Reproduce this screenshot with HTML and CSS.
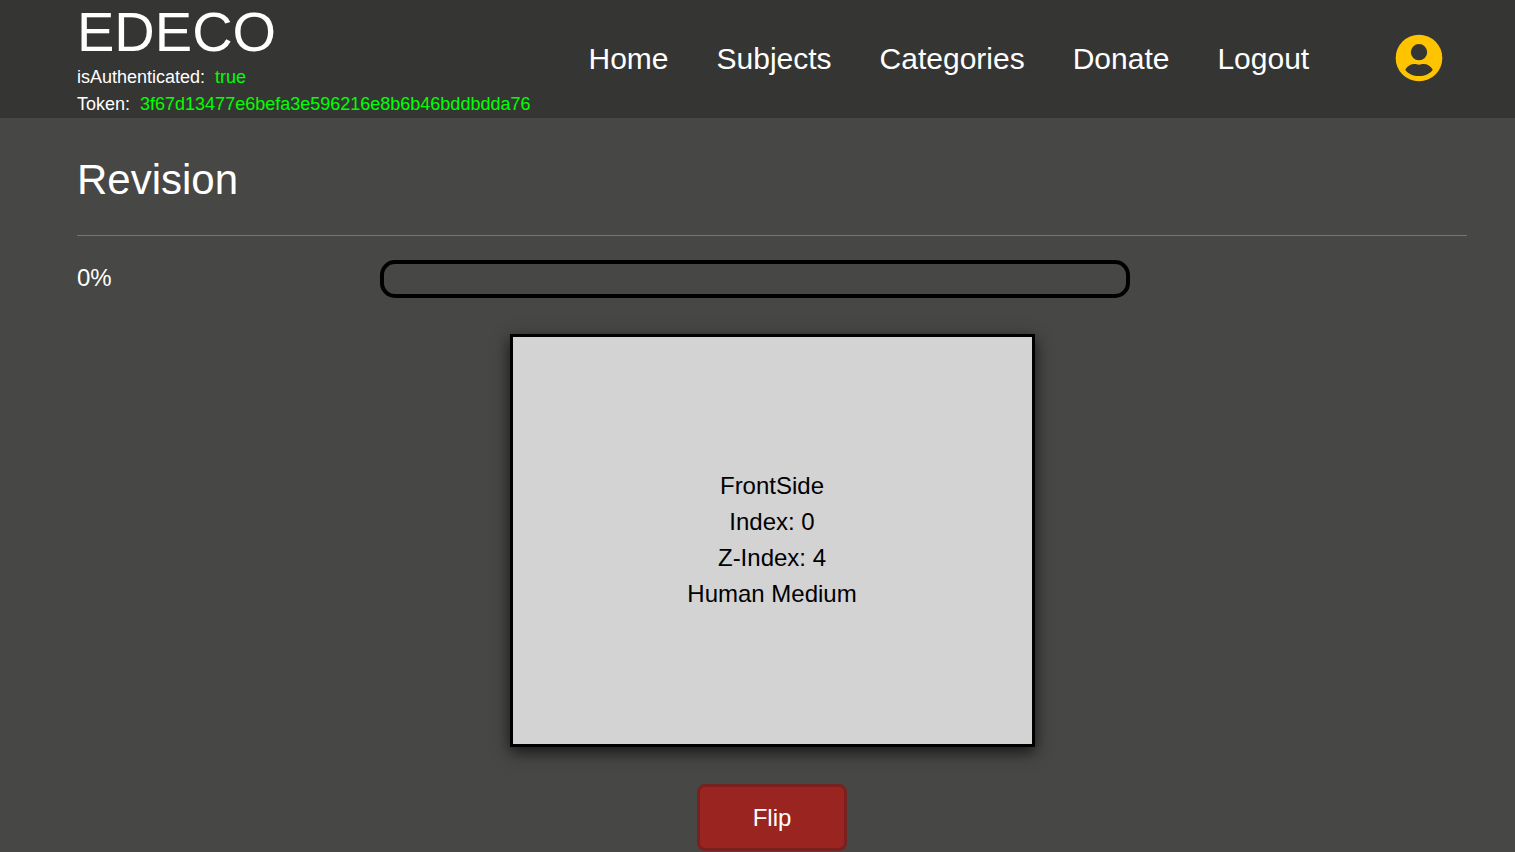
FILE: index.html
```html
<!DOCTYPE html>
<html lang="en">
<head>
<meta charset="utf-8">
<meta name="viewport" content="width=device-width, initial-scale=1">
<title>EDECO - Revision</title>
<link rel="stylesheet" href="styles.css">
</head>
<body>
<header class="header">
  <div class="brand">
    <a class="brand-name" href="#">EDECO</a>
    <div class="status"><span>isAuthenticated:</span><span class="status-value">true</span></div>
    <div class="status"><span>Token:</span><span class="status-value">3f67d13477e6befa3e596216e8b6b46bddbdda76</span></div>
  </div>
  <nav class="nav">
    <a href="#">Home</a>
    <a href="#">Subjects</a>
    <a href="#">Categories</a>
    <a href="#">Donate</a>
    <a href="#">Logout</a>
  </nav>
  <button class="account" type="button" aria-label="Account">
    <svg class="account-icon" viewBox="0 0 24 24" aria-hidden="true">
      <path fill="currentColor" fill-rule="evenodd" d="M12 2a10 10 0 1 0 0 20a10 10 0 1 0 0-20zM12 6a3.5 3.5 0 1 1 0 7a3.5 3.5 0 1 1 0-7zM6.1 17C7 15.4 8.5 14.6 10 14.6c.8 0 1.2.3 2 .3s1.2-.3 2-.3c1.5 0 3 .8 3.9 2.4C16.7 18.8 14.5 19.7 12 19.7S7.3 18.8 6.1 17z"/>
    </svg>
  </button>
</header>
<main class="page">
  <h1 class="title">Revision</h1>
  <div class="progress-row">
    <label for="progress">0%</label>
    <progress class="progress" id="progress" value="0" max="100"></progress>
  </div>
  <section class="card">
    <p>FrontSide</p>
    <p>Index: 0</p>
    <p>Z-Index: 4</p>
    <p>Human Medium</p>
  </section>
  <button class="flip" type="button">Flip</button>
</main>
</body>
</html>
```
FILE: styles.css
```css
* {
  box-sizing: border-box;
}

body {
  margin: 0;
  background: #474745;
  color: #fff;
  font: 24px/36px "Liberation Sans", Arial, sans-serif;
}

.header {
  display: flex;
  align-items: center;
  padding: 0 68px 0 77px;
  background: #353533;
}

.brand-name {
  display: block;
  color: #fff;
  font-size: 56px;
  line-height: 64px;
  text-decoration: none;
}

.status {
  display: flex;
  gap: 10px;
  font-size: 18px;
  line-height: 27px;
}

.status-value {
  color: #0f0;
}

.nav {
  display: flex;
  gap: 48px;
  margin-left: 58px;
  padding-bottom: 2px;
}

.nav a {
  color: #fff;
  font-size: 30px;
  line-height: 45px;
  text-decoration: none;
}

.account {
  margin-left: auto;
  padding: 0 0 2px;
  border: 0;
  background: none;
  color: #ffc400;
  line-height: 0;
  cursor: pointer;
}

.account-icon {
  width: 56px;
  height: 56px;
}

.page {
  display: flex;
  flex-direction: column;
  align-items: center;
  padding: 30px 48px 0 77px;
}

.title {
  align-self: stretch;
  margin: 0 0 24px;
  padding-bottom: 24px;
  border-bottom: 1px solid #757573;
  font-size: 42px;
  font-weight: 400;
  line-height: 63px;
}

.progress-row {
  display: grid;
  grid-template-columns: 303fr 750fr 337fr;
  align-self: stretch;
  align-items: center;
  margin-bottom: 36px;
}

.progress-row label {
  padding-bottom: 2px;
}

.progress {
  width: 100%;
  height: 38px;
  border: 4px solid #000;
  border-radius: 15px;
  overflow: hidden;
  background: transparent;
  appearance: none;
}

.progress::-webkit-progress-bar {
  background: transparent;
}

.progress::-webkit-progress-value {
  background: #0f0;
}

.card {
  display: flex;
  flex-direction: column;
  justify-content: center;
  width: 525px;
  max-width: 100%;
  min-height: 413px;
  margin-bottom: 37px;
  padding-bottom: 2px;
  border: 3px solid #000;
  background: #d3d3d3;
  box-shadow: 0 5px 15px rgba(0, 0, 0, 0.7);
  color: #000;
  text-align: center;
}

.card p {
  margin: 0;
}

.flip {
  min-width: 150px;
  padding: 13px 24px 12px;
  border: 3px solid #7a201e;
  border-radius: 8px;
  background: #9a2520;
  color: #fff;
  font: inherit;
  cursor: pointer;
}
```
